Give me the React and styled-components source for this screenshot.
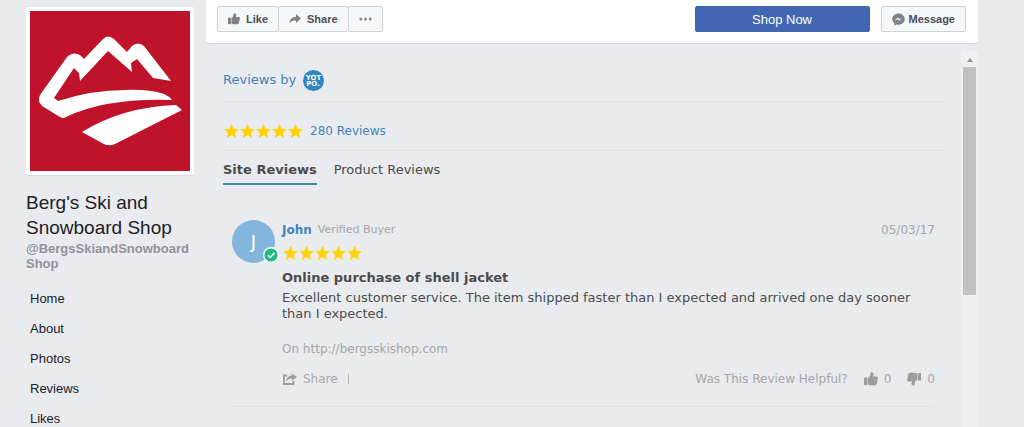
import React from 'react';
import styled, { createGlobalStyle } from 'styled-components';

const GlobalStyle = createGlobalStyle`
  * {
    box-sizing: border-box;
  }
  body {
    margin: 0;
    background: #e9ebee;
    font-family: "Liberation Sans", Arial, sans-serif;
    color: #1d2129;
  }
  a {
    color: inherit;
    text-decoration: none;
  }
  button {
    font-family: inherit;
    cursor: pointer;
  }
  svg {
    display: block;
    flex: none;
  }
  h1, h2, h3, p {
    margin: 0;
  }
`;

const Page = styled.div`
  display: flex;
  min-height: 100vh;
  padding-right: 46px;
`;

const Sidebar = styled.aside`
  flex: none;
  width: 206px;
  padding: 7px 12px 0 26px;
`;

const Avatar = styled.a`
  display: block;
  padding: 4px;
  background: #fff;
  border-radius: 2px;
  box-shadow: 0 1px 1px rgba(0, 0, 0, 0.08);
`;

const PageName = styled.h1`
  margin-top: 15px;
  font-size: 19px;
  font-weight: 400;
  line-height: 25px;
`;

const Handle = styled.a`
  display: block;
  margin-top: 1px;
  font-size: 13px;
  font-weight: 700;
  line-height: 15px;
  color: #90949c;
  word-break: break-all;
`;

const Nav = styled.nav`
  display: flex;
  flex-direction: column;
  gap: 16px;
  margin-top: 21px;
  padding-left: 4px;
  font-size: 13px;
  line-height: 14px;
`;

const Main = styled.main`
  flex: 1;
  min-width: 0;
  display: flex;
  flex-direction: column;
`;

const Toolbar = styled.div`
  display: flex;
  align-items: center;
  padding: 6px 12px 11px 11px;
  background: #fff;
  border-radius: 0 0 3px 3px;
  box-shadow: 0 1px 1px rgba(0, 0, 0, 0.08);
`;

const ButtonGroup = styled.div`
  display: flex;
  margin-right: auto;
`;

const ToolButton = styled.button`
  display: flex;
  align-items: center;
  gap: ${(props) => props.$gap || 6}px;
  height: 26px;
  padding: 0 10px;
  border: 1px solid #ced0d4;
  border-radius: 2px;
  background: #f6f7f9;
  color: #4b4f56;
  font-size: 11px;
  font-weight: 700;

  & + & {
    margin-left: -1px;
  }
`;

const ShopButton = styled.button`
  width: 175px;
  height: 26px;
  margin-right: 11px;
  border: 1px solid #4267b2;
  border-radius: 2px;
  background: #4267b2;
  color: #fff;
  font-size: 13px;
`;

const Frame = styled.div`
  flex: 1;
  display: flex;
  margin-top: 8px;
`;

const Widget = styled.section`
  flex: 1;
  min-width: 0;
  padding: 0 17px;
  font-family: "DejaVu Sans", Verdana, sans-serif;
  font-size: 13px;
  line-height: 16px;
  color: #4c4c4c;
`;

const Track = styled.div`
  display: flex;
  flex-direction: column;
  align-items: center;
  width: 17px;
  background: #f0f0f1;
`;

const Arrow = styled.div`
  margin: 7px 0 5px;
  border: 3px solid transparent;
  border-top: 0;
  border-bottom: 4px solid #929292;
`;

const Thumb = styled.div`
  width: 13px;
  height: 228px;
  background: #c1c1c1;
`;

const Heading = styled.div`
  display: flex;
  align-items: center;
  gap: 7px;
  height: 51px;
  padding-top: 8px;
  border-bottom: 1px solid #e2e3e5;
  color: #3f83bd;
`;

const Summary = styled.div`
  display: flex;
  align-items: center;
  gap: 7px;
  height: 49px;
  padding-top: 9px;
  border-bottom: 1px solid #e2e3e5;
  font-size: 12px;
  color: #4683ba;
`;

const StarRow = styled.div`
  display: flex;
`;

const Tabs = styled.div`
  display: flex;
  gap: 17px;
`;

const Tab = styled.button`
  height: 34px;
  padding: 4px 0 0;
  border: 0;
  border-bottom: 2px solid ${(props) => (props.$active ? '#3f89bf' : 'transparent')};
  background: none;
  color: #4c4c4c;
  font-size: 13px;
  font-weight: ${(props) => (props.$active ? 700 : 400)};
`;

const Review = styled.article`
  display: flex;
  gap: 7px;
  margin: 35px 9px 0;
  padding-bottom: 19px;
  border-bottom: 1px solid #e2e3e5;
`;

const Badge = styled.div`
  position: relative;
  flex: none;
  display: flex;
  align-items: center;
  justify-content: center;
  width: 43px;
  height: 43px;
  border-radius: 50%;
  background: #84b5dc;
  color: #fff;
  font-size: 18px;
`;

const Verified = styled.span`
  position: absolute;
  right: -4px;
  bottom: 0;
`;

const ReviewBody = styled.div`
  flex: 1;
  min-width: 0;
`;

const Row = styled.div`
  display: flex;
  align-items: center;
`;

const Author = styled.strong`
  margin-right: 6px;
  font-size: 12px;
  line-height: 20px;
  color: #4683ba;
`;

const Muted = styled.span`
  font-size: ${(props) => (props.$small ? 11 : 12)}px;
  color: #a5a7a9;
  margin-left: ${(props) => (props.$end ? 'auto' : 0)};
`;

const ReviewStars = styled.div`
  padding: 5px 0;
`;

const ReviewTitle = styled.h2`
  margin: 2px 0;
  font-size: 13px;
  line-height: 20px;
`;

const Source = styled.p`
  margin-top: 19px;
  font-size: 12px;
  color: #a5a7a9;
`;

const Footer = styled.div`
  display: flex;
  align-items: center;
  margin-top: 14px;
  font-size: 12px;
  color: #a5a7a9;
`;

const LinkButton = styled.button`
  display: flex;
  align-items: center;
  gap: 6px;
  margin-left: ${(props) => (props.$space || 0)}px;
  padding: 0;
  border: 0;
  background: none;
  color: inherit;
  font-size: 12px;
`;

const Divider = styled.span`
  width: 1px;
  height: 10px;
  margin: 0 auto 0 10px;
  background: #b5b7b9;
`;

const Logo = () => (
  <svg width="160" height="160" viewBox="0 0 160 160" role="img" aria-label="Berg's Ski and Snowboard Shop">
    <rect width="160" height="160" fill="#be132b" />
    <g fill="#fff">
      <path d="M10 84 L37 46 Q43 40 50 44 L54 48 L73 28 Q78 23 84 28 L97 41 L102 35 Q108 30 114 35 L141 70 L123 67 L107 48 L101 52 L102 61 L78 40 L50 70 L49 62 L44 57 L24 87 L28 90 Q62 79 95 79 Q118 78 134 83 Q139 85 142 89 Q75 87 36 106 Q33 108 30 106 L12 95 Q7 90 10 84 Z" />
      <path d="M52 121 Q92 96 146 94 L152 99 L85 133 Q78 136 72 132 Z" />
    </g>
  </svg>
);

const ThumbIcon = ({ size = 14, color = '#9a9c9f', down }) => (
  <svg width={size} height={size} viewBox="0 0 14 14" fill={color}>
    <g transform={down ? 'rotate(180 7 7)' : undefined}>
      <path d="M0 5.500h3.400v7.500H0z" />
      <path d="M4 6 Q6 4.800 6.200 3 L6.500 .8 Q8 -.3 9.300 1.300 Q9.900 3 9 4.600 H13 Q14.200 5.200 13.800 7 L12.700 12 Q12.200 13.200 11 13.200 H6 L4 12.300 Z" />
    </g>
  </svg>
);

const ArrowIcon = () => (
  <svg width="12" height="12" viewBox="0 0 12 12" fill="#7f8287">
    <path d="M7 1 L12 5.500 L7 10 V7.500 Q2.500 7 .5 10.500 Q.5 4.500 7 3.800 Z" />
  </svg>
);

const DotsIcon = () => (
  <svg width="13" height="4" viewBox="0 0 13 4" fill="#85888d">
    <circle cx="1.800" cy="2" r="1.500" />
    <circle cx="6.500" cy="2" r="1.500" />
    <circle cx="11.200" cy="2" r="1.500" />
  </svg>
);

const MessengerIcon = () => (
  <svg width="13" height="13" viewBox="0 0 13 13">
    <path d="M6.500 .5 C2.900 .5 .2 3 .2 6.100 Q.2 8.700 2.200 10.300 V12.700 L4.500 11.400 Q5.500 11.700 6.500 11.700 C10.100 11.700 12.800 9.200 12.800 6.100 S10.100 .5 6.500 .5Z" fill="#7f8287" />
    <path d="M2.800 7.800 L5.700 4.600 L7.400 6.200 L10.300 4.600 L7.300 7.800 L5.700 6.300Z" fill="#f6f7f9" />
  </svg>
);

const YotpoIcon = () => (
  <svg width="21" height="21" viewBox="0 0 21 21" fill="#fff">
    <circle cx="10.500" cy="10.500" r="10.500" fill="#2f84c2" />
    <text x="10.500" y="10" fontSize="7" fontWeight="700" textAnchor="middle">YOT</text>
    <text x="10" y="16" fontSize="7" fontWeight="700" textAnchor="middle">PO.</text>
  </svg>
);

const ShareIcon = () => (
  <svg width="15" height="13" viewBox="0 0 15 13">
    <path d="M5 2.500 H1.900 V11 H11.500 V8" fill="none" stroke="#9a9c9f" strokeWidth="1.800" />
    <path d="M10 .5 L15 4 L10 7.500 V5.500 Q6 5.500 4 8.800 Q4.300 3 10 2.500Z" fill="#9a9c9f" />
  </svg>
);

const CheckIcon = () => (
  <svg width="16" height="16" viewBox="0 0 16 16">
    <circle cx="8" cy="8" r="7.300" fill="#1cbc83" stroke="#fff" strokeWidth="1.400" />
    <path d="M4.800 8 L7.200 10.300 L11.500 5.800" fill="none" stroke="#fff" strokeWidth="1.700" />
  </svg>
);

const Stars = () => (
  <StarRow role="img" aria-label="5 out of 5 stars">
    {[1, 2, 3, 4, 5].map((n) => (
      <svg key={n} width="16" height="16" viewBox="0 0 16 16" fill="#ffd200">
        <path d="M8.500 .8 L10.500 5.800 L16 6.200 L11.800 9.700 L13.100 14.900 L8.500 12 L3.900 14.900 L5.200 9.700 L1 6.200 L6.500 5.800Z" />
      </svg>
    ))}
  </StarRow>
);

const navItems = ['Home', 'About', 'Photos', 'Reviews', 'Likes'];

const App = () => {
  return (
    <>
      <GlobalStyle />
      <Page>
        <Sidebar>
          <Avatar href="#"><Logo /></Avatar>
          <PageName>Berg's Ski and Snowboard Shop</PageName>
          <Handle href="#">@BergsSkiandSnowboardShop</Handle>
          <Nav>
            {navItems.map((item) => (
              <a key={item} href="#">{item}</a>
            ))}
          </Nav>
        </Sidebar>
        <Main>
          <Toolbar>
            <ButtonGroup>
              <ToolButton><ThumbIcon size={12} color="#7f8287" />Like</ToolButton>
              <ToolButton><ArrowIcon />Share</ToolButton>
              <ToolButton aria-label="More"><DotsIcon /></ToolButton>
            </ButtonGroup>
            <ShopButton>Shop Now</ShopButton>
            <ToolButton $gap={4}><MessengerIcon />Message</ToolButton>
          </Toolbar>
          <Frame>
            <Widget>
              <Heading>Reviews by <YotpoIcon /></Heading>
              <Summary><Stars /><a href="#">280 Reviews</a></Summary>
              <Tabs>
                <Tab $active>Site Reviews</Tab>
                <Tab>Product Reviews</Tab>
              </Tabs>
              <Review>
                <Badge>J<Verified><CheckIcon /></Verified></Badge>
                <ReviewBody>
                  <Row>
                    <Author>John</Author>
                    <Muted $small>Verified Buyer</Muted>
                    <Muted $end>05/03/17</Muted>
                  </Row>
                  <ReviewStars><Stars /></ReviewStars>
                  <ReviewTitle>Online purchase of shell jacket</ReviewTitle>
                  <p>
                    Excellent customer service. The item shipped faster than I expected and arrived one day sooner
                    than I expected.
                  </p>
                  <Source>On http://bergsskishop.com</Source>
                  <Footer>
                    <LinkButton><ShareIcon />Share</LinkButton>
                    <Divider />
                    Was This Review Helpful?
                    <LinkButton $space={16}><ThumbIcon />0</LinkButton>
                    <LinkButton $space={16}><ThumbIcon down />0</LinkButton>
                  </Footer>
                </ReviewBody>
              </Review>
            </Widget>
            <Track>
              <Arrow />
              <Thumb />
            </Track>
          </Frame>
        </Main>
      </Page>
    </>
  );
};

export default App;
